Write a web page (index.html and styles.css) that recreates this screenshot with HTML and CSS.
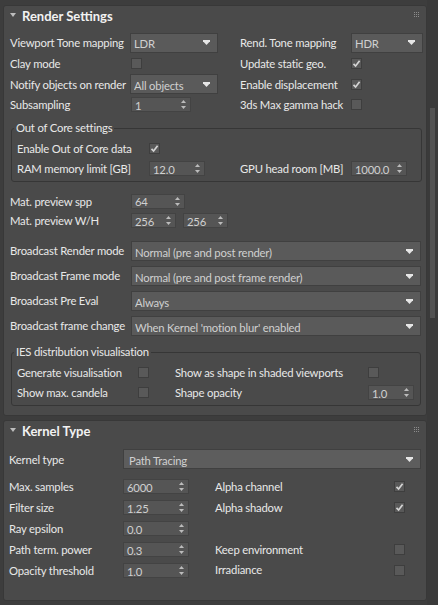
FILE: index.html
```html
<!DOCTYPE html>
<html>
<head>
<meta charset="utf-8">
<title>Render Settings</title>
<link rel="stylesheet" href="styles.css">
</head>
<body>
<div class="app">
  <div class="panels">
    <section class="rollout">
      <header class="rhead">
        <svg class="tri" width="6" height="4" viewBox="0 0 6 4"><polygon points="0,0 6,0 3,4" fill="#bdbdbd"/></svg>
        <span class="rtitle">Render Settings</span>
        <svg class="grip" width="5" height="5" viewBox="0 0 5 5" fill="#8c8c8c"><rect x="0" y="0" width="1" height="1"/><rect x="2" y="0" width="1" height="1"/><rect x="4" y="0" width="1" height="1"/><rect x="0" y="2" width="1" height="1"/><rect x="2" y="2" width="1" height="1"/><rect x="4" y="2" width="1" height="1"/><rect x="0" y="4" width="1" height="1"/><rect x="2" y="4" width="1" height="1"/><rect x="4" y="4" width="1" height="1"/></svg>
      </header>
      <div class="rbody b1">
        <div class="row h21">
          <div class="half l1"><span class="lbl w120">Viewport Tone mapping</span><div class="dd w88 h20"><span class="val">LDR</span><svg class="arr" width="7" height="5" viewBox="0 0 7 5"><polygon points="0,0 7,0 7,1.2 3.5,5 0,1.2" fill="#e6e6e6"/></svg></div></div>
          <div class="half"><span class="lbl w111">Rend. Tone mapping</span><div class="dd w72 h20"><span class="val">HDR</span><svg class="arr" width="7" height="5" viewBox="0 0 7 5"><polygon points="0,0 7,0 7,1.2 3.5,5 0,1.2" fill="#e6e6e6"/></svg></div></div>
        </div>
        <div class="row h20">
          <div class="half l1"><span class="lbl w120">Clay mode</span><span class="cb ml1"></span></div>
          <div class="half"><span class="lbl w111">Update static geo.</span><span class="cb"><svg width="9" height="9" viewBox="0 0 9 9"><path d="M1.5 4.8 L3.6 7 L7.6 1.8" fill="none" stroke="#d4d4d4" stroke-width="1.7"/></svg></span></div>
        </div>
        <div class="row h22">
          <div class="half l1"><span class="lbl w120">Notify objects on render</span><div class="dd w88 h20"><span class="val">All objects</span><svg class="arr" width="7" height="5" viewBox="0 0 7 5"><polygon points="0,0 7,0 7,1.2 3.5,5 0,1.2" fill="#e6e6e6"/></svg></div></div>
          <div class="half"><span class="lbl w111">Enable displacement</span><span class="cb"><svg width="9" height="9" viewBox="0 0 9 9"><path d="M1.5 4.8 L3.6 7 L7.6 1.8" fill="none" stroke="#d4d4d4" stroke-width="1.7"/></svg></span></div>
        </div>
        <div class="row h19">
          <div class="half l1"><span class="lbl w120">Subsampling</span><div class="sp w60 ml1"><span class="val">1</span><svg class="spa" width="5" height="9" viewBox="0 0 5 9"><polygon points="2.5,0 5,3 0,3" fill="#bcbcbc"/><polygon points="0,6 5,6 2.5,9" fill="#bcbcbc"/></svg></div></div>
          <div class="half"><span class="lbl w111">3ds Max gamma hack</span><span class="cb"></span></div>
        </div>

        <fieldset class="grp g1">
          <legend>Out of Core settings</legend>
          <div class="row h20">
            <div class="half l2"><span class="lbl w132">Enable Out of Core data</span><span class="cb"><svg width="9" height="9" viewBox="0 0 9 9"><path d="M1.5 4.8 L3.6 7 L7.6 1.8" fill="none" stroke="#d4d4d4" stroke-width="1.7"/></svg></span></div>
          </div>
          <div class="row h21">
            <div class="half l2"><span class="lbl w132">RAM memory limit [GB]</span><div class="sp w56"><span class="val">12.0</span><svg class="spa" width="5" height="9" viewBox="0 0 5 9"><polygon points="2.5,0 5,3 0,3" fill="#bcbcbc"/><polygon points="0,6 5,6 2.5,9" fill="#bcbcbc"/></svg></div></div>
            <div class="half"><span class="lbl w111">GPU head room [MB]</span><div class="sp w56"><span class="val">1000.0</span><svg class="spa" width="5" height="9" viewBox="0 0 5 9"><polygon points="2.5,0 5,3 0,3" fill="#bcbcbc"/><polygon points="0,6 5,6 2.5,9" fill="#bcbcbc"/></svg></div></div>
          </div>
        </fieldset>

        <div class="mat">
          <div class="row h20">
            <span class="lbl w121">Mat. preview spp</span><div class="sp w54"><span class="val">64</span><svg class="spa" width="5" height="9" viewBox="0 0 5 9"><polygon points="2.5,0 5,3 0,3" fill="#bcbcbc"/><polygon points="0,6 5,6 2.5,9" fill="#bcbcbc"/></svg></div>
          </div>
          <div class="row h19">
            <span class="lbl w121">Mat. preview W/H</span><div class="sp w45"><span class="val">256</span><svg class="spa" width="5" height="9" viewBox="0 0 5 9"><polygon points="2.5,0 5,3 0,3" fill="#bcbcbc"/><polygon points="0,6 5,6 2.5,9" fill="#bcbcbc"/></svg></div><div class="sp w45 ml7"><span class="val">256</span><svg class="spa" width="5" height="9" viewBox="0 0 5 9"><polygon points="2.5,0 5,3 0,3" fill="#bcbcbc"/><polygon points="0,6 5,6 2.5,9" fill="#bcbcbc"/></svg></div>
          </div>
        </div>

        <div class="bcast">
          <div class="row h20"><span class="lbl w121 up">Broadcast Render mode</span><div class="dd w290 h20"><span class="val">Normal (pre and post render)</span><svg class="arr" width="7" height="5" viewBox="0 0 7 5"><polygon points="0,0 7,0 7,1.2 3.5,5 0,1.2" fill="#e6e6e6"/></svg></div></div>
          <div class="row h20"><span class="lbl w121 up">Broadcast Frame mode</span><div class="dd w290 h20"><span class="val">Normal (pre and post frame render)</span><svg class="arr" width="7" height="5" viewBox="0 0 7 5"><polygon points="0,0 7,0 7,1.2 3.5,5 0,1.2" fill="#e6e6e6"/></svg></div></div>
          <div class="row h20"><span class="lbl w121 up">Broadcast Pre Eval</span><div class="dd w290 h20"><span class="val">Always</span><svg class="arr" width="7" height="5" viewBox="0 0 7 5"><polygon points="0,0 7,0 7,1.2 3.5,5 0,1.2" fill="#e6e6e6"/></svg></div></div>
          <div class="row h20"><span class="lbl w121 up">Broadcast frame change</span><div class="dd w290 h20"><span class="val">When Kernel 'motion blur' enabled</span><svg class="arr" width="7" height="5" viewBox="0 0 7 5"><polygon points="0,0 7,0 7,1.2 3.5,5 0,1.2" fill="#e6e6e6"/></svg></div></div>
        </div>

        <fieldset class="grp g2">
          <legend>IES distribution visualisation</legend>
          <div class="row h20">
            <div class="half l3"><span class="lbl w121">Generate visualisation</span><span class="cb"></span></div>
            <div class="half"><span class="lbl w193">Show as shape in shaded viewports</span><span class="cb"></span></div>
          </div>
          <div class="row h21">
            <div class="half l3"><span class="lbl w121">Show max. candela</span><span class="cb"></span></div>
            <div class="half"><span class="lbl w193">Shape opacity</span><div class="sp w46"><span class="val">1.0</span><svg class="spa" width="5" height="9" viewBox="0 0 5 9"><polygon points="2.5,0 5,3 0,3" fill="#bcbcbc"/><polygon points="0,6 5,6 2.5,9" fill="#bcbcbc"/></svg></div></div>
          </div>
        </fieldset>
      </div>
    </section>

    <section class="rollout">
      <header class="rhead">
        <svg class="tri" width="6" height="4" viewBox="0 0 6 4"><polygon points="0,0 6,0 3,4" fill="#bdbdbd"/></svg>
        <span class="rtitle">Kernel Type</span>
        <svg class="grip" width="5" height="5" viewBox="0 0 5 5" fill="#8c8c8c"><rect x="0" y="0" width="1" height="1"/><rect x="2" y="0" width="1" height="1"/><rect x="4" y="0" width="1" height="1"/><rect x="0" y="2" width="1" height="1"/><rect x="2" y="2" width="1" height="1"/><rect x="4" y="2" width="1" height="1"/><rect x="0" y="4" width="1" height="1"/><rect x="2" y="4" width="1" height="1"/><rect x="4" y="4" width="1" height="1"/></svg>
      </header>
      <div class="rbody b2">
        <div class="row h20"><span class="lbl w114">Kernel type</span><div class="dd kdd w298 h20"><span class="val">Path Tracing</span><svg class="arr" width="7" height="5" viewBox="0 0 7 5"><polygon points="0,0 7,0 7,1.2 3.5,5 0,1.2" fill="#e6e6e6"/></svg></div></div>
        <div class="krows">
          <div class="row h21">
            <div class="half l4"><span class="lbl w114">Max. samples</span><div class="sp w66"><span class="val">6000</span><svg class="spa" width="5" height="9" viewBox="0 0 5 9"><polygon points="2.5,0 5,3 0,3" fill="#bcbcbc"/><polygon points="0,6 5,6 2.5,9" fill="#bcbcbc"/></svg></div></div>
            <div class="half"><span class="lbl w179">Alpha channel</span><span class="cb"><svg width="9" height="9" viewBox="0 0 9 9"><path d="M1.5 4.8 L3.6 7 L7.6 1.8" fill="none" stroke="#d4d4d4" stroke-width="1.7"/></svg></span></div>
          </div>
          <div class="row h21">
            <div class="half l4"><span class="lbl w114">Filter size</span><div class="sp w66"><span class="val">1.25</span><svg class="spa" width="5" height="9" viewBox="0 0 5 9"><polygon points="2.5,0 5,3 0,3" fill="#bcbcbc"/><polygon points="0,6 5,6 2.5,9" fill="#bcbcbc"/></svg></div></div>
            <div class="half"><span class="lbl w179">Alpha shadow</span><span class="cb"><svg width="9" height="9" viewBox="0 0 9 9"><path d="M1.5 4.8 L3.6 7 L7.6 1.8" fill="none" stroke="#d4d4d4" stroke-width="1.7"/></svg></span></div>
          </div>
          <div class="row h21">
            <div class="half l4"><span class="lbl w114">Ray epsilon</span><div class="sp w66"><span class="val">0.0</span><svg class="spa" width="5" height="9" viewBox="0 0 5 9"><polygon points="2.5,0 5,3 0,3" fill="#bcbcbc"/><polygon points="0,6 5,6 2.5,9" fill="#bcbcbc"/></svg></div></div>
          </div>
          <div class="row h21">
            <div class="half l4"><span class="lbl w114">Path term. power</span><div class="sp w66"><span class="val">0.3</span><svg class="spa" width="5" height="9" viewBox="0 0 5 9"><polygon points="2.5,0 5,3 0,3" fill="#bcbcbc"/><polygon points="0,6 5,6 2.5,9" fill="#bcbcbc"/></svg></div></div>
            <div class="half"><span class="lbl w179">Keep environment</span><span class="cb"></span></div>
          </div>
          <div class="row h21">
            <div class="half l4"><span class="lbl w114">Opacity threshold</span><div class="sp w66"><span class="val">1.0</span><svg class="spa" width="5" height="9" viewBox="0 0 5 9"><polygon points="2.5,0 5,3 0,3" fill="#bcbcbc"/><polygon points="0,6 5,6 2.5,9" fill="#bcbcbc"/></svg></div></div>
            <div class="half"><span class="lbl w179 up">Irradiance</span><span class="cb"></span></div>
          </div>
        </div>
      </div>
    </section>
  </div>
  <div class="scroll"><div class="thumb"></div></div>
</div>
</body>
</html>
```

FILE: styles.css
```css
* { box-sizing: border-box; }
html, body { margin: 0; padding: 0; }
body {
  background: #3d3d3d;
  width: 438px;
  height: 605px;
  overflow: hidden;
  font-family: Lato, "Noto Sans", sans-serif;
  font-size: 11.3px;
  letter-spacing: -0.2px;
  color: #e8e8e8;
}
.app { display: flex; height: 605px; }
.panels {
  width: 427px;
  padding: 5px 0 0 3px;
  display: flex;
  flex-direction: column;
  gap: 4px;
}
.rollout {
  background: #4a4a4a;
  border: 1px solid #383838;
  border-radius: 3px;
}
.rhead {
  display: flex;
  align-items: center;
  height: 20px;
  padding: 0 7px 0 6px;
}
.tri { margin-right: 6px; margin-top: -2px; }
.rtitle { font-weight: bold; font-size: 13px; letter-spacing: 0; color: #f2f2f2; }
.grip { margin-left: auto; margin-top: -3px; }

.rbody { display: flex; flex-direction: column; }
.b1 { padding: 6px 3px 9px 6px; }
.b2 { padding: 8px 5px 19px 5px; }

.row { display: flex; align-items: center; }
.h19 { height: 19px; }
.h20 { height: 20px; }
.h21 { height: 21px; }
.h22 { height: 22px; }

.half { display: flex; align-items: center; }
.l1 { width: 230px; }
.l2 { width: 223px; }
.l3 { width: 158px; }
.l4 { width: 206px; }

.lbl { white-space: nowrap; flex: none; }
.up { position: relative; top: -1px; }
.w111 { width: 111px; }
.w114 { width: 114px; }
.w120 { width: 120px; }
.w121 { width: 121px; }
.w132 { width: 132px; }
.w179 { width: 179px; }
.w193 { width: 193px; }

.ml1 { margin-left: 1px; }
.ml7 { margin-left: 7px; }

.dd {
  display: flex;
  align-items: center;
  flex: none;
  background: #5a5a5a;
  border: 1px solid #404040;
  padding: 2px 7px 0 3px;
  color: #d0d0d0;
}
.kdd { background: #5d5d5d; padding-left: 5px; }
.dd .val { flex: 1; white-space: nowrap; overflow: hidden; }
.arr { flex: none; margin-top: -2px; }
.w72 { width: 72px; }
.w88 { width: 88px; }
.w290 { width: 290px; }
.w298 { width: 298px; }

.sp {
  display: flex;
  align-items: center;
  flex: none;
  height: 15px;
  background: #555555;
  border: 1px solid #434343;
  padding: 1px 4px 0 3px;
  color: #d0d0d0;
}
.sp .val { flex: 1; white-space: nowrap; }
.spa { flex: none; margin-top: -1px; }
.w45 { width: 45px; }
.w46 { width: 46px; }
.w54 { width: 54px; }
.w56 { width: 56px; }
.w60 { width: 60px; }
.w66 { width: 66px; }

.cb {
  flex: none;
  width: 11px;
  height: 11px;
  background: #595959;
  border: 1px solid #3e3e3e;
  display: flex;
  align-items: center;
  justify-content: center;
}

.grp {
  margin: 0 1px 0 1px;
  padding: 3px 0 2px 5px;
  border: 1px solid #363636;
  border-radius: 3px;
  min-width: 0;
}
.grp legend {
  padding: 0 2px;
  margin-left: -3px;
  line-height: 14px;
  height: 14px;
}
.g1 { margin-top: 7px; }
.g2 { margin-top: 9px; margin-right: 2px; }

.mat { margin-top: 9px; }
.bcast { margin-top: 11px; display: flex; flex-direction: column; gap: 5px; }
.krows { margin-top: 7px; }

.scroll {
  width: 11px;
  background: #3a3a3a;
  padding-left: 3px;
}
.thumb {
  width: 5px;
  height: 210px;
  margin-top: 108px;
  background: #525252;
}
```
